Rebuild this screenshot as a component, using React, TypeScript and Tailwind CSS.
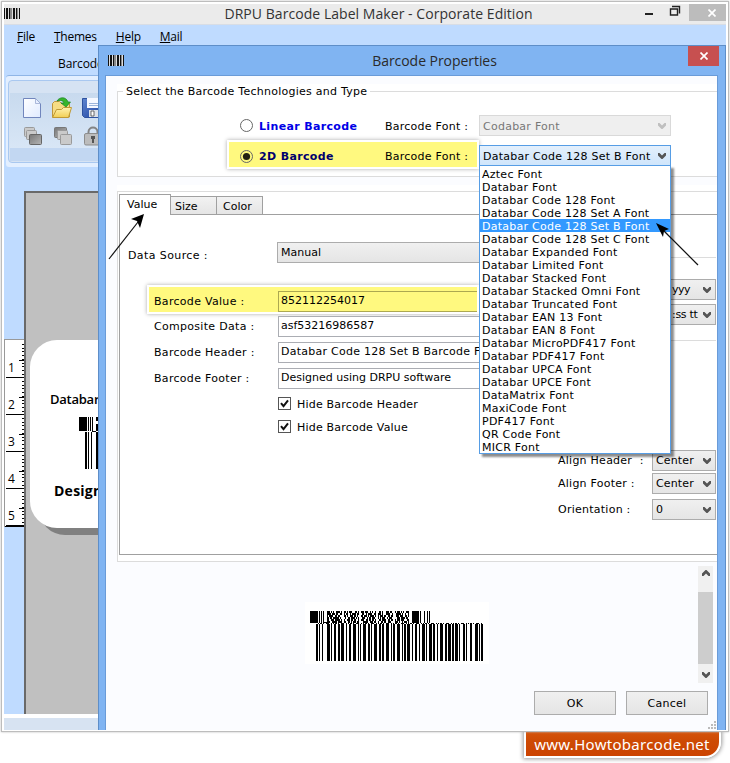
import clsx from "clsx";
import type { ReactNode } from "react";

const FONTS = [
  "Aztec Font",
  "Databar Font",
  "Databar Code 128 Font",
  "Databar Code 128 Set A Font",
  "Databar Code 128 Set B Font",
  "Databar Code 128 Set C Font",
  "Databar Expanded Font",
  "Databar Limited Font",
  "Databar Stacked Font",
  "Databar Stacked Omni Font",
  "Databar Truncated Font",
  "Databar EAN 13 Font",
  "Databar EAN 8 Font",
  "Databar MicroPDF417 Font",
  "Databar PDF417 Font",
  "Databar UPCA Font",
  "Databar UPCE Font",
  "DataMatrix Font",
  "MaxiCode Font",
  "PDF417 Font",
  "QR Code Font",
  "MICR Font",
];

const SELECTED = "Databar Code 128 Set B Font";

// [x, width] of every bar in the linear part
const BARS = [
  [6, 2], [9, 1], [12, 1], [17, 3], [21, 1], [24, 2], [28, 2], [31, 3], [36, 1], [39, 2], [43, 3], [48, 1],
  [50, 1], [53, 3], [58, 2], [61, 1], [64, 3], [69, 2], [72, 2], [76, 3], [81, 1], [83, 2], [87, 3], [92, 1],
  [94, 2], [97, 3], [102, 1], [105, 2], [109, 1], [112, 3], [116, 1], [119, 3], [123, 2], [127, 1], [130, 3],
  [135, 2], [138, 3], [142, 2], [145, 3], [149, 1], [153, 2], [156, 1], [160, 2], [165, 3], [169, 1], [171, 2],
];

// composite rows, two pixels high each
const ROWS = [
  "1110101001111010011010111000110100111011100101001100110100011101100010111010100111",
  "1111011101100110010110010111101110011001011110011011110100011110011001111101001001",
  "1011110011011001111010011101101001110111010111101001011101100110110101110111001101",
  "1101101111110101001001101111010111011100101101110011010111001011101100111011110110",
  "1100111011111011010011101101100101111001101101101000110111100110111010111011100011",
  "1110011111011110011001101011101101001111100111011001001101100111001111101001011101",
];

function CompositeBarcode() {
  return (
    <svg width="174" height="50" viewBox="0 0 174 50" shapeRendering="crispEdges" className="block">
      <rect x="0" y="0" width="8" height="12" />
      <path d="M9 0h1v12h-1zM11 0h1v12h-1zM13 0h1v12h-1zM13 11h4v1h-4z" />
      {ROWS.map((row, y) =>
        row.split("").map((bit, x) => (bit === "1" ? <rect key={`${y}-${x}`} x={17 + x} y={y * 2} width="1" height="2" /> : null))
      )}
      <path fill="#fff" d="M32 0h2v12h-2zM49 0h2v12h-2zM66 0h2v12h-2zM83 0h2v12h-2zM100 0h2v12h-2z" />
      <path d="M102 0h7v12h-7zM110 0h1v12h-1zM114 0h1v12h-1zM117 0h1v12h-1zM119 0h1v12h-1z" />
      <path d="M8 12.5H173" stroke="#000" strokeDasharray="1 1 2 1 1 2 3 2 1 1" />
      {BARS.map(([x, w]) => (
        <rect key={x} x={x} y="13" width={w} height="37" />
      ))}
    </svg>
  );
}

function AppIcon() {
  return (
    <svg width="16" height="11" viewBox="0 0 16 11" shapeRendering="crispEdges">
      <rect width="16" height="11" fill="#ddd" />
      <path d="M0 0h1v11H0zM2 0h2v11H2zM5 0h1v11H5zM9 0h2v11H9zM12 0h1v11h-1zM15 0h1v11h-1z" fill="#111" />
      <path d="M6 0h2v11H6zM13 0h1v11h-1z" fill="#888" />
    </svg>
  );
}

function Chevron({ up, className }: { up?: boolean; className?: string }) {
  return (
    <svg width="8" height="6" viewBox="0 0 8 6" className={clsx("shrink-0", up && "rotate-180", className || "text-[#555]")}>
      <path d="M0 0h1.500L4 2.500 6.500 0H8v2.500L4.500 6h-1L0 2.500z" fill="currentColor" />
    </svg>
  );
}

function Combo({ children, className }: { children: ReactNode; className?: string }) {
  return (
    <div className={clsx("flex h-[21px] items-center justify-between border border-[#acacac] bg-linear-to-b from-[#f0f0f0] to-[#e5e5e5] pr-1 pl-[3px]", className)}>
      {children}
      <Chevron />
    </div>
  );
}

function Field({ label, value, marked, wide }: { label: string; value: string; marked?: boolean; wide?: boolean }) {
  return (
    <div className={clsx("relative flex h-[21px] items-center", marked && "z-0")}>
      {marked && <div className="absolute -top-1 left-[29px] -z-10 h-[25px] w-[328px] bg-[#fff97f] shadow-[0_0_0_2px_#fff,0_0_4px_2px_#aaa]" />}
      <div className="w-[158px] pl-[34px] tracking-[0.3px]">{label}</div>
      <div
        className={clsx(
          "h-[21px] overflow-hidden border pl-[2px] leading-[18px] whitespace-nowrap",
          marked ? "w-[199px] border-r-0 border-[#aca850]" : "w-[270px] border-[#abadb3] bg-white",
          wide ? "tracking-[0.25px]" : "tracking-normal"
        )}
      >
        {value}
      </div>
    </div>
  );
}

function Check({ children }: { children: ReactNode }) {
  return (
    <div className="flex h-[13px] items-center">
      <svg width="13" height="13" viewBox="0 0 13 13" className="mr-[6px] ml-[158px]">
        <rect x="0.5" y="0.5" width="12" height="12" fill="#fff" stroke="#555" />
        <path d="M3 6.2l2.500 3L10 3.300" fill="none" stroke="#111" strokeWidth="2" />
      </svg>
      <span className="pt-[2px] tracking-[0.2px]">{children}</span>
    </div>
  );
}

function Radio({ on }: { on?: boolean }) {
  return (
    <svg width="13" height="13" viewBox="0 0 13 13" className="mr-[6px] shrink-0">
      <circle cx="6.5" cy="6.5" r="6" fill={on ? "#fff97f" : "#fff"} stroke="#666" />
      {on && <circle cx="6.5" cy="6.5" r="3.6" fill="#221f10" />}
    </svg>
  );
}

function Ruler() {
  const ticks = Array.from({ length: 50 }, (_, i) => i);
  return (
    <div className="h-[188px] w-5 border-t border-l border-[#999] bg-white">
      <svg width="19" height="187" viewBox="0 0 19 187" shapeRendering="crispEdges" fontFamily="'Open Sans', sans-serif" fontSize="12">
        {ticks.map((i) => (
          <path key={i} d={`M17 ${Math.round(3.7 * i + 4)}.5H19`} stroke="#000" />
        ))}
        {[0, 1, 2, 3, 4].map((i) => (
          <g key={i}>
            <path d={`M14 ${20.5 + i * 37}H19M1 ${37.5 + i * 37}H19`} stroke="#000" />
            <text x="3" y={32 + i * 37}>{i + 1}</text>
          </g>
        ))}
        <path d="M0 186.500H19" stroke="#000" />
      </svg>
    </div>
  );
}

function Toolbar() {
  return (
    <div className="ml-[2px] h-[92px] w-[110px] rounded-[3px] border-t border-[#8fb5e6] bg-[#e3efff] pt-1 pl-[2px]">
      <div className="h-[83px] rounded-[4px] border border-[#a9c8f0] bg-[#d6e3f3] p-px">
        <div className="mt-[11px] h-[55px] bg-linear-to-b from-[#c8daee] to-[#d8e6f6] pl-[13px]">
          <svg width="90" height="55" viewBox="0 0 90 55">
            <defs>
              <linearGradient id="page" x2="1" y2="1"><stop stopColor="#fff" /><stop offset="1" stopColor="#dfeaff" /></linearGradient>
              <linearGradient id="folder" x2="0" y2="1"><stop stopColor="#fff2b0" /><stop offset="1" stopColor="#f2cf55" /></linearGradient>
              <linearGradient id="stack" x2="1" y2="1"><stop stopColor="#777" /><stop offset="1" stopColor="#b5b5b5" /></linearGradient>
              <linearGradient id="disk" x2="1" y2="1"><stop stopColor="#5f86d0" /><stop offset="1" stopColor="#1c409c" /></linearGradient>
            </defs>
            {/* new */}
            <path d="M0.500 5.500h12l5 5v14h-17z" fill="url(#page)" stroke="#7186bd" />
            <path d="M12.500 5.500v5h5z" fill="#e8efff" stroke="#9aaad0" strokeWidth=".8" />
            {/* open */}
            <path d="M29.500 24V10.500l2-2h5l2 2h8V24z" fill="#f5dc84" stroke="#bd963c" />
            <path d="M29.500 24.500l4-8h5l2-2h8l-3 10z" fill="url(#folder)" stroke="#c09a36" />
            <path d="M34 8c2-4 9-5 11 1h2.500L43 14l-5-4h3c-1-3-4-3-7-2z" fill="#36b52c" stroke="#1a8222" strokeWidth=".7" />
            {/* save */}
            <path d="M59.500 5.500h20v19h-18l-2-2z" fill="url(#disk)" stroke="#2e529f" />
            <path d="M64 5h15v10H64z" fill="#f5f8ff" />
            <path d="M66 10.500h12M66 12.500h12" stroke="#9bb4da" />
            <path d="M66 17h12v7H66z" fill="#dce1e8" /><path d="M68 18h3v5h-3z" fill="#fff" stroke="#333" strokeWidth=".7" />
            {/* send back / bring forward */}
            <g stroke="#9a9a9a" fill="#cacaca">
              <rect x="1.500" y="34.500" width="10" height="9" rx="1" />
              <rect x="3.500" y="37.500" width="10" height="9" rx="1" />
              <rect x="6.500" y="41.500" width="12" height="10" rx="1" fill="url(#stack)" stroke="#666" />
              <rect x="31.500" y="34.500" width="12" height="10" rx="1" fill="url(#stack)" stroke="#777" />
              <rect x="34.500" y="37.500" width="10" height="9" rx="1" />
              <rect x="37.500" y="41.500" width="11" height="10" rx="1" />
            </g>
            {/* lock */}
            <path d="M65.500 41v-2c0-6 9-6 9 0v2" fill="none" stroke="#848484" strokeWidth="2" />
            <rect x="61.500" y="40.500" width="17" height="11.500" rx="1.500" fill="#bcbcbc" stroke="#8d8d8d" />
            <path d="M68 43h4v3h-1v4h-2v-4h-1z" fill="#555" />
          </svg>
        </div>
        <div className="h-[13px] bg-[#c2d7f2]" />
      </div>
    </div>
  );
}

function LabelCanvas() {
  return (
    <div className="flex h-[523px] w-[90px] flex-col overflow-hidden border-t-2 border-l-2 border-[#696969] bg-[#c0c0c0] pt-[147px] pl-1">
      <div className="h-[188px] w-[160px] shrink-0 rounded-[27px] bg-white pl-5 shadow-[8px_8px_0_-1px_#808080]">
        <div className="pt-[50px] font-['Open_Sans',sans-serif] text-[13px] leading-[18px] font-semibold tracking-[-0.25px]">Databar</div>
        <div className="mt-[9px] ml-[29px]">
          <svg width="60" height="52" viewBox="0 0 60 52" shapeRendering="crispEdges" className="block">
            <path d="M0 0h8v14H0zM9 0h1v14H9zM11 0h1v14h-1zM13 0h1v14h-1zM13 14h4v1h-4zM17 0h4v4h-4zM17 7h4v7h-4zM6 15h2v37H6zM9 15h1v37H9zM12 15h1v37h-1zM17 15h3v37h-3z" />
          </svg>
        </div>
        <div className="mt-[12px] ml-[4px] font-['Open_Sans',sans-serif] text-[14px] leading-5 font-bold">Design</div>
      </div>
    </div>
  );
}

function TypeGroup() {
  return (
    <div className="relative z-10 ml-[11px] h-[93px] bg-white">
      <div className="flex h-[14px] items-center">
        <div className="h-px w-[6px] bg-[#dcdcdc]" />
        <div className="mr-[3px] ml-[3px] tracking-[0.25px]">Select the Barcode Technologies and Type</div>
        <div className="h-px flex-1 bg-[#dcdcdc]" />
      </div>
      <div className="-mt-[7px] h-[86px] border-b border-l border-[#dcdcdc] pt-6">
        <div className="flex h-[21px] items-center pl-[122px]">
          <Radio />
          <div className="w-[126px] pt-px font-bold tracking-[0.35px] text-[#0000e6]">Linear Barcode</div>
          <div className="w-[94px] pt-px">Barcode Font :</div>
          <div className="flex h-[21px] w-[192px] items-center justify-between border border-[#d9d9d9] bg-[#efefef] pt-px pr-1 pl-[3px] text-[#777]">
            Codabar Font
            <Chevron className="text-[#bfbfbf]" />
          </div>
        </div>
        <div className="mt-[6px] flex h-[25px] items-center pl-[111px]">
          <div className="mr-[2px] flex h-[25px] w-[248px] items-center bg-[#fff97f] pt-[3px] pl-[11px] shadow-[0_0_0_2px_#fff,0_0_4px_2px_#aaa]">
            <Radio on />
            <div className="w-[126px] pt-px font-bold tracking-[0.35px] text-[#00006e]">2D Barcode</div>
            <div className="pt-px">Barcode Font :</div>
          </div>
          <div className="relative">
            <div className="mt-[2px] flex h-[21px] w-[192px] items-center justify-between border border-[#569de5] bg-linear-to-b from-[#e4f0fc] to-[#cfe5fb] pt-px pr-1 pl-[3px]">
              {SELECTED}
              <Chevron />
            </div>
            <div className="absolute top-[22px] left-0 w-[192px] border border-[#569de5] bg-white pt-px shadow-[3px_3px_2px_rgba(0,0,0,0.45)]">
              {FONTS.map((font) => (
                <div key={font} className={clsx("h-[13px] pl-[2px] leading-[15px] whitespace-nowrap", font === SELECTED && "bg-[#3399ff] text-white")}>
                  {font}
                </div>
              ))}
            </div>
          </div>
        </div>
      </div>
    </div>
  );
}

function ValuePane() {
  return (
    <div className="flex h-[340px] overflow-hidden border-b border-l border-[#a0a0a0]">
      <div className="w-[436px] shrink-0 pt-[27px]">
        <div className="flex h-[21px] items-center">
          <div className="w-[157px] pt-[5px] pl-2 tracking-[0.4px]">Data Source :</div>
          <Combo className="w-[240px] tracking-normal">Manual</Combo>
        </div>
        <div className="mt-7 flex flex-col">
          <Field label="Barcode Value :" value="852112254017" marked />
          <div className="mt-1"><Field label="Composite Data :" value="asf53216986587" /></div>
          <div className="mt-[5px]"><Field label="Barcode Header :" value="Databar Code 128 Set B Barcode Font" wide /></div>
          <div className="mt-[5px]"><Field label="Barcode Footer :" value="Designed using DRPU software" /></div>
        </div>
        <div className="mt-[8px] flex flex-col gap-[10px]">
          <Check>Hide Barcode Header</Check>
          <Check>Hide Barcode Value</Check>
        </div>
      </div>
      <div className="flex w-[160px] shrink-0 flex-col items-end pt-[42px]">
        <div className="h-px w-full bg-[#dcdcdc]" />
        <Combo className="mt-[21px] w-[47px] border-l-0 pl-0 tracking-[-0.5px]">yyy</Combo>
        <Combo className="mt-1 w-[47px] border-l-0 pl-[2px] tracking-[-0.3px]">:ss tt</Combo>
        <div className="mt-[15px] h-px w-full bg-[#dcdcdc]" />
        <div className="mt-[109px] flex w-[158px] items-center justify-between">
          <span>Align Header&nbsp; :</span>
          <Combo className="w-16 tracking-[0.15px]">Center</Combo>
        </div>
        <div className="mt-[2px] flex w-[158px] items-center justify-between">
          <span>Align Footer :</span>
          <Combo className="w-16 tracking-[0.15px]">Center</Combo>
        </div>
        <div className="mt-[5px] flex w-[158px] items-center justify-between">
          <span>Orientation :</span>
          <Combo className="w-16">0</Combo>
        </div>
      </div>
    </div>
  );
}

function BarcodeDialog() {
  return (
    <div className="absolute top-[41px] left-[94px] flex h-[685px] w-[628px] flex-col overflow-hidden border-t border-r border-l border-[#5e8ec8] bg-[#80b4f2]">
      <div className="flex h-[29px] shrink-0 items-start pl-[9px]">
        <div className="pt-[9px]"><AppIcon /></div>
        <div className="flex-1 pt-[5px] pl-[57px] text-center font-['Open_Sans',sans-serif] text-[14px] leading-5 tracking-[-0.05px] text-[#2a2a2a]">Barcode Properties</div>
        <div className="mr-[6px] flex h-5 w-[31px] items-center justify-center bg-[#c75050] pl-px">
          <svg width="8" height="8" viewBox="0 0 8 8"><path d="M.5.5l7 7M7.500.5l-7 7" stroke="#fff" strokeWidth="1.700" /></svg>
        </div>
      </div>
      <div className="mr-[7px] ml-[6px] flex min-h-0 flex-1 flex-col border-x border-t border-[#6a9bd8] bg-[#fbfcff] pt-2">
        <TypeGroup />
        <div className="mt-2 ml-[11px] h-[6px] shrink-0 bg-white" />
        <div className="ml-[11px] h-[371px] shrink-0 border-y border-l border-[#dcdcdc] bg-white pt-[2px] pl-px">
          <div className="flex h-[21px] items-end tracking-normal">
            <div className="h-[21px] w-[52px] border-t border-r border-l border-[#a0a0a0] bg-white pl-[7px] leading-[19px]">Value</div>
            <div className="h-[19px] w-[46px] border border-l-0 border-[#a0a0a0] bg-linear-to-b from-[#f2f2f2] to-[#e5e5e5] pl-[4px] leading-[19px]">Size</div>
            <div className="h-[19px] w-[46px] border border-l-0 border-[#a0a0a0] bg-linear-to-b from-[#f2f2f2] to-[#e5e5e5] pl-[6px] leading-[19px]">Color</div>
            <div className="h-px flex-1 bg-[#a0a0a0]" />
          </div>
          <ValuePane />
        </div>
        <div className="flex h-[129px] shrink-0 justify-between pt-1">
          <div className="mt-9 ml-[199px] h-[62px] w-[184px] bg-white pt-[9px] pl-[5px]"><CompositeBarcode /></div>
          <div className="mr-[4px] flex h-[117px] w-[15px] flex-col items-center bg-[#f0f0f0]">
            <Chevron up className="mt-[4px] text-[#555]" />
            <div className="mt-[16px] h-[72px] w-[15px] bg-[#cdcdcd]" />
            <Chevron className="mt-[8px] text-[#555]" />
          </div>
        </div>
        <div className="flex justify-end gap-[10px] pr-[9px]">
          <div className="h-6 w-[82px] border border-[#acacac] bg-linear-to-b from-[#f0f0f0] to-[#e5e5e5] text-center leading-[23px]">OK</div>
          <div className="h-6 w-[82px] border border-[#acacac] bg-linear-to-b from-[#f0f0f0] to-[#e5e5e5] text-center leading-[23px]">Cancel</div>
        </div>
        <svg width="8" height="8" viewBox="0 0 8 8" className="mt-[6px] mr-px self-end">
          <path d="M6 0h2v2H6zM3 3h2v2H3zM6 3h2v2H6zM0 6h2v2H0zM3 6h2v2H3zM6 6h2v2H6z" fill="#bbb" />
        </svg>
      </div>
    </div>
  );
}

export default function App() {
  return (
    <div className="relative h-[763px] w-[730px] overflow-hidden bg-white font-['DejaVu_Sans',sans-serif] text-[11px] leading-[13px] tracking-[0.25px] text-black">
      {/* site badge, tucked under the window */}
      <div className="absolute top-[725px] left-[524px] h-[33px] w-[197px] rounded-br-[16px] border-2 border-white bg-linear-to-b from-[#d8590f] via-[#cd4a04] to-[#cc4300] pt-[6px] pr-px text-center font-['Noto_Sans',sans-serif] text-[15px] leading-[22px] tracking-[0.3px] text-white shadow-[0_0_4px_1px_#999]">
        www.Howtobarcode.net
      </div>

      <div className="relative mt-px ml-px h-[731px] w-[728px] border border-[#bdbdbd] bg-white p-[2px] shadow-[0_0_2px_#bbb]">
        <div className="relative h-[726px] w-[722px] overflow-hidden bg-[#bfdbff]">
          <div className="flex h-[21px] items-start border-b border-[#d8dde5] bg-[#ebebeb]">
            <div className="pt-1"><AppIcon /></div>
            <div className="flex-1 pl-[93px] text-center font-['Open_Sans',sans-serif] text-[14px] leading-[20px] tracking-[0.05px] text-[#333]">DRPU Barcode Label Maker - Corporate Edition</div>
            <svg width="40" height="16" viewBox="0 0 40 16" className="mr-[5px]" fill="none" stroke="#222">
              <path d="M1 10h8" strokeWidth="2" />
              <path d="M26.500 5h7v6h-7zM28 2.500h7.500V9.500" strokeWidth="1.400" />
            </svg>
            <div className="flex h-[17px] w-[37px] items-center justify-center bg-[#bcbcbc] pl-2">
              <svg width="8" height="8" viewBox="0 0 8 8"><path d="M.5.5l7 7M7.500.5l-7 7" stroke="#fff" strokeWidth="1.700" /></svg>
            </div>
          </div>
          <div className="flex h-6 items-center gap-[19px] pb-[2px] pl-[13px] font-['Open_Sans',sans-serif] text-[12px] tracking-[-0.25px]">
            <span><u>F</u>ile</span>
            <span><u>T</u>hemes</span>
            <span><u>H</u>elp</span>
            <span><u>M</u>ail</span>
          </div>
          <div className="h-[26px] pt-[8px] pl-[54px] font-['Open_Sans',sans-serif] text-[12px] tracking-[-0.1px]">Barcode</div>
          <Toolbar />
          <div className="mt-[24px] flex">
            <div className="pt-[148px]"><Ruler /></div>
            <LabelCanvas />
          </div>
          <div className="h-1 bg-white" />
          <div className="h-3 bg-[#d7e3f2]" />
          <BarcodeDialog />
        </div>
      </div>

      {/* pointer arrows over the dialog */}
      <svg width="36" height="46" viewBox="0 0 36 46" className="absolute top-[214px] left-[108px] z-20">
        <path d="M1 45L30 8" stroke="#111" strokeWidth="1.200" />
        <path d="M36 0L23 5l6 2 3 7z" fill="#000" />
      </svg>
      <svg width="44" height="44" viewBox="0 0 44 44" className="absolute top-[222px] left-[655px] z-20">
        <path d="M8 8L43 43" stroke="#111" strokeWidth="1.200" />
        <path d="M1 1l13 6-5 2-1 6z" fill="#000" />
      </svg>
    </div>
  );
}
